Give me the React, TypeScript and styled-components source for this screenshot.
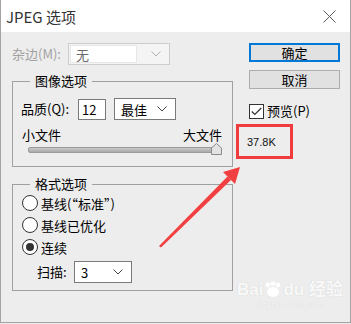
import styled, { createGlobalStyle } from "styled-components";

const GlobalStyle = createGlobalStyle`
  html, body {
    margin: 0;
    padding: 0;
    background: #ececec;
  }
  body {
    font-family: "Microsoft YaHei", "Noto Sans CJK SC", "Noto Sans", sans-serif;
    font-size: 13px;
    color: #000;
  }
`;

const Window = styled.div`
  position: relative;
  width: 349px;
  height: 322px;
  background: #ededed;
  border: 1px solid #a3a3a3;
  border-top: none;
  overflow: hidden;
`;

const TitleBar = styled.div`
  height: 32px;
  background: #fff;
  display: flex;
  align-items: center;
  justify-content: space-between;
  padding: 0 14px 0 5px;
  font-size: 15px;
  color: #333;
`;

const Body = styled.div`
  display: flex;
  padding: 11px 0 0 11px;
`;

const LeftColumn = styled.div`
  width: 221px;
  display: flex;
  flex-direction: column;
`;

const RightColumn = styled.div`
  width: 91px;
  margin-left: 16px;
  display: flex;
  flex-direction: column;
`;

const Row = styled.div<{ $indent?: number; $top?: number }>`
  display: flex;
  align-items: center;
  padding-left: ${(p) => p.$indent ?? 0}px;
  margin-top: ${(p) => p.$top ?? 0}px;
`;

const Label = styled.span<{ $width?: number; $muted?: boolean }>`
  width: ${(p) => (p.$width ? `${p.$width}px` : "auto")};
  color: ${(p) => (p.$muted ? "#a2a2a2" : "#000")};
  white-space: nowrap;
  line-height: 16px;
`;

const Group = styled.fieldset<{ $top: number; $bottom: number; $padTop: number }>`
  margin: ${(p) => p.$top}px 0 0 0;
  border: 1px solid #a0a0a0;
  padding: ${(p) => p.$padTop}px 8px ${(p) => p.$bottom}px 8px;
  min-width: 0;
`;

const Legend = styled.legend`
  margin-left: 9px;
  padding: 0 5px;
  font-size: 13px;
  line-height: 16px;
`;

const Select = styled.div<{ $width: number; $disabled?: boolean }>`
  width: ${(p) => p.$width}px;
  height: 22px;
  box-sizing: border-box;
  display: flex;
  align-items: center;
  justify-content: space-between;
  background: ${(p) => (p.$disabled ? "#f4f4f4" : "#fff")};
  border: 1px solid ${(p) => (p.$disabled ? "#cdcdcd" : "#7a7a7a")};
  padding: 0 8px 0 6px;
  color: ${(p) => (p.$disabled ? "#6a6a6a" : "#000")};
`;

const DisabledField = styled.div`
  flex: 1;
  align-self: stretch;
  margin: 1px 14px 1px -5px;
  padding-left: 5px;
  display: flex;
  align-items: center;
  background: #fff;
  border: 1px solid #e6e6e6;
`;

const TextInput = styled.div`
  width: 28px;
  height: 21px;
  box-sizing: border-box;
  border: 1px solid #7a7a7a;
  background: #fff;
  display: flex;
  align-items: center;
  padding-left: 3px;
  margin-right: 8px;
`;

const SizeLabels = styled.div`
  display: flex;
  justify-content: space-between;
  margin-top: 7px;
  padding: 0 2px 0 1px;
  line-height: 16px;
`;

const Slider = styled.div`
  position: relative;
  height: 11px;
  margin: 1px 2px 0 7px;
  display: flex;
  align-items: center;
`;

const Track = styled.div`
  flex: 1;
  height: 4px;
  border-radius: 2px;
  border: 1px solid #9a9a9a;
  background: linear-gradient(#c9c9c9, #a9a9a9);
`;

const Thumb = styled.svg`
  position: absolute;
  right: 0;
  top: -1px;
`;

const RadioRow = styled.div`
  height: 22px;
  display: flex;
  align-items: center;
  gap: 3px;
  padding-left: 1px;
`;

const Radio = styled.span<{ $checked?: boolean }>`
  width: 16px;
  height: 16px;
  box-sizing: border-box;
  border-radius: 50%;
  border: 1px solid #333;
  background: #fff;
  display: flex;
  align-items: center;
  justify-content: center;
  &::after {
    content: "";
    width: 8px;
    height: 8px;
    border-radius: 50%;
    background: ${(p) => (p.$checked ? "#333" : "transparent")};
  }
`;

const Button = styled.div<{ $primary?: boolean; $top?: number }>`
  height: 19px;
  box-sizing: border-box;
  margin-top: ${(p) => p.$top ?? 0}px;
  background: #e1e1e1;
  border: ${(p) => (p.$primary ? "2px solid #0078d7" : "1px solid #adadad")};
  display: flex;
  align-items: center;
  justify-content: center;
  line-height: 16px;
`;

const CheckRow = styled.div`
  display: flex;
  align-items: center;
  gap: 3px;
  margin-top: 14px;
  line-height: 16px;
`;

const CheckBox = styled.span`
  width: 15px;
  height: 15px;
  box-sizing: border-box;
  border: 1px solid #333;
  background: #fff;
  display: flex;
  align-items: center;
  justify-content: center;
`;

const SizeBox = styled.div`
  margin: 5px 0 0 -13px;
  width: 57px;
  height: 35px;
  box-sizing: border-box;
  border: 3px solid #f03c3c;
  display: flex;
  align-items: center;
  padding-left: 8px;
  font-family: "Liberation Sans", "Noto Sans", sans-serif;
  font-size: 11px;
  color: #111;
`;

const Annotation = styled.svg`
  position: absolute;
  left: 0;
  top: 0;
  pointer-events: none;
`;

const Watermark = styled.div`
  position: absolute;
  left: 236px;
  top: 280px;
  color: rgba(255, 255, 255, 0.9);
  text-shadow: 0 0 1px rgba(170, 170, 170, 0.5);
  font-family: "Liberation Sans", "Noto Sans CJK SC", sans-serif;
  display: flex;
  flex-direction: column;
  align-items: center;
`;

const Brand = styled.div`
  font-size: 17px;
  font-weight: 700;
  line-height: 20px;
  display: flex;
  align-items: center;
`;

const Site = styled.div`
  font-size: 8px;
  line-height: 10px;
  letter-spacing: 0.3px;
  font-family: "Liberation Serif", serif;
`;

const Chevron = ({ color = "#444" }: { color?: string }) => (
  <svg width="10" height="6" viewBox="0 0 10 6">
    <path d="M0.5 0.5 L5 5 L9.5 0.5" fill="none" stroke={color} strokeWidth="1" />
  </svg>
);

export default function App() {
  return (
    <>
      <GlobalStyle />
      <Window>
        <TitleBar>
          <span>JPEG 选项</span>
          <svg width="13" height="13" viewBox="0 0 13 13">
            <path d="M0.5 0.5 L12.5 12.5 M12.5 0.5 L0.5 12.5" stroke="#5a5a5a" strokeWidth="1" />
          </svg>
        </TitleBar>
        <Body>
          <LeftColumn>
            <Row>
              <Label $width={56} $muted>杂边(M):</Label>
              <Select $width={102} $disabled>
                <DisabledField>无</DisabledField>
                <Chevron color="#b0b0b0" />
              </Select>
            </Row>

            <Group $top={8} $padTop={9} $bottom={11}>
              <Legend>图像选项</Legend>
              <Row>
                <Label $width={57}>品质(Q):</Label>
                <TextInput>12</TextInput>
                <Select $width={62}>
                  <span>最佳</span>
                  <Chevron />
                </Select>
              </Row>
              <SizeLabels>
                <span>小文件</span>
                <span>大文件</span>
              </SizeLabels>
              <Slider>
                <Track />
                <Thumb width="11" height="12" viewBox="0 0 11 12">
                  <path d="M0.5 5 L5.5 0.5 L10.5 5 L10.5 11.5 L0.5 11.5 Z" fill="#e3e3e3" stroke="#8a8a8a" />
                </Thumb>
              </Slider>
            </Group>

            <Group $top={9} $padTop={0} $bottom={7}>
              <Legend>格式选项</Legend>
              <RadioRow>
                <Radio />
                <span>基线(“标准”)</span>
              </RadioRow>
              <RadioRow>
                <Radio />
                <span>基线已优化</span>
              </RadioRow>
              <RadioRow>
                <Radio $checked />
                <span>连续</span>
              </RadioRow>
              <Row $indent={16} $top={3}>
                <Label $width={37}>扫描:</Label>
                <Select $width={58}>
                  <span>3</span>
                  <Chevron />
                </Select>
              </Row>
            </Group>
          </LeftColumn>

          <RightColumn>
            <Button $primary>确定</Button>
            <Button $top={8}>取消</Button>
            <CheckRow>
              <CheckBox>
                <svg width="11" height="9" viewBox="0 0 11 9">
                  <path d="M0.8 4.5 L3.8 7.5 L10.2 1" fill="none" stroke="#333" strokeWidth="1.2" />
                </svg>
              </CheckBox>
              <span>预览(P)</span>
            </CheckRow>
            <SizeBox>37.8K</SizeBox>
          </RightColumn>
        </Body>

        <Watermark>
          <Brand>
            Bai
            <svg width="20" height="18" viewBox="0 0 20 18">
              <circle cx="5" cy="4" r="2.4" fill="#fff" />
              <circle cx="10" cy="2.6" r="2.4" fill="#fff" />
              <circle cx="15" cy="4" r="2.4" fill="#fff" />
              <ellipse cx="10" cy="11" rx="6" ry="5" fill="#fff" />
            </svg>
            du 经验
          </Brand>
          <Site>jingyan.baidu.com</Site>
        </Watermark>

        <Annotation width="351" height="324" viewBox="0 0 351 324">
          <polygon points="158,246 160,247.5 230,180 226.5,176.5" fill="#f23f3f" />
          <polygon points="222,172 239,167 234,184" fill="#f23f3f" />
        </Annotation>
      </Window>
    </>
  );
}
